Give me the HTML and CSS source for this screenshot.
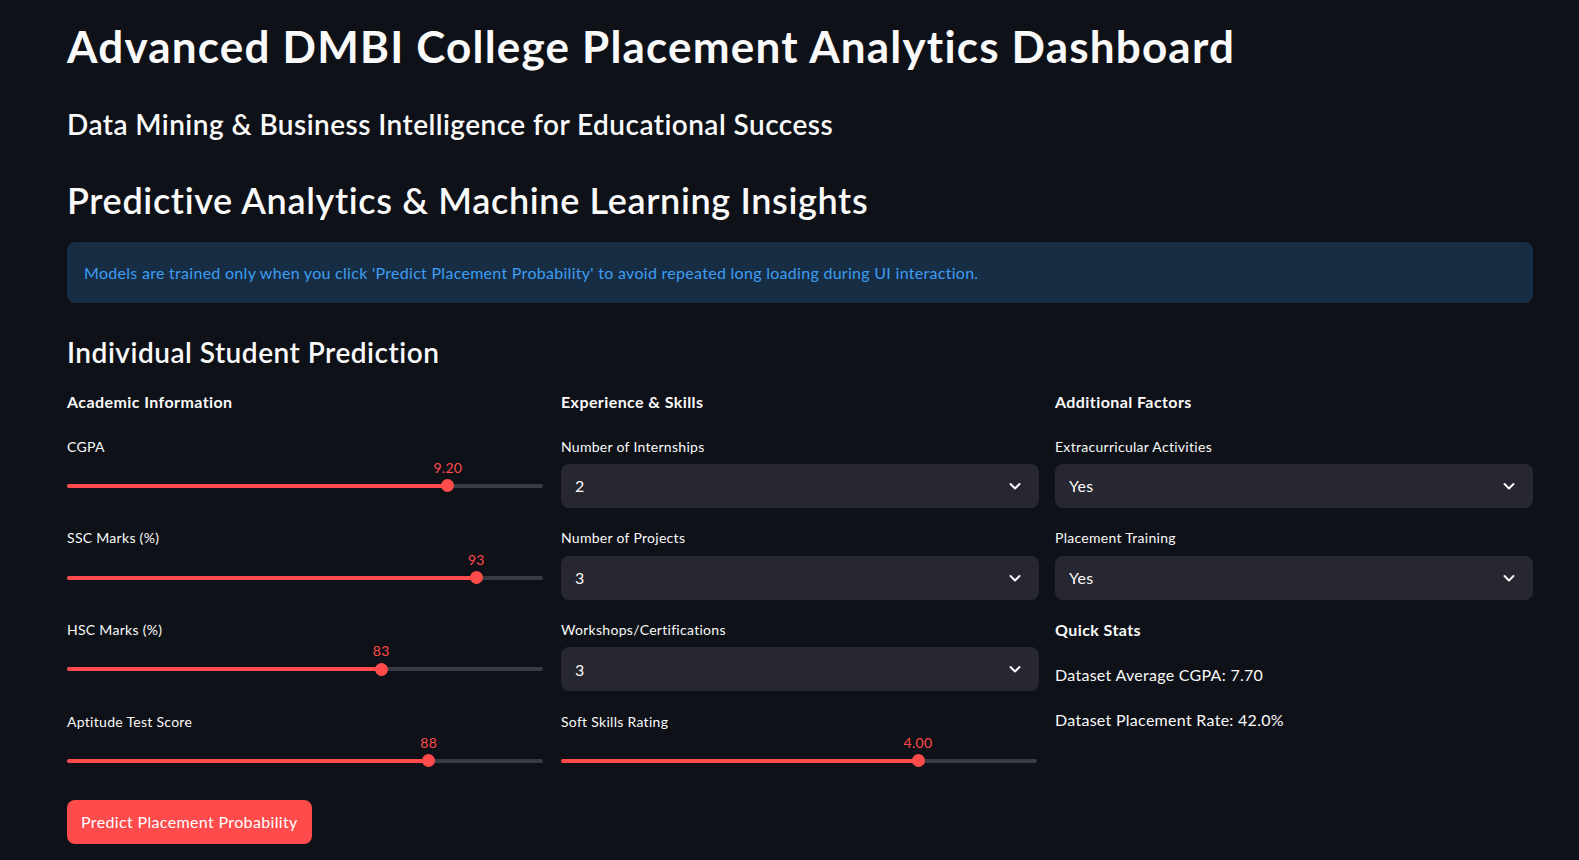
FILE: index.html
```html
<!DOCTYPE html>
<html lang="en">
<head>
<meta charset="utf-8">
<title>Advanced DMBI College Placement Analytics Dashboard</title>
<link rel="stylesheet" href="styles.css">
</head>
<body>
<div class="topbar"><span class="deploy">Deploy</span></div>
<main class="main">
  <h1 class="title">Advanced DMBI College Placement Analytics Dashboard</h1>
  <h3 class="subtitle">Data Mining &amp; Business Intelligence for Educational Success</h3>
  <h2 class="section">Predictive Analytics &amp; Machine Learning Insights</h2>
  <div class="info">Models are trained only when you click 'Predict Placement Probability' to avoid repeated long loading during UI interaction.</div>
  <h3 class="subsection">Individual Student Prediction</h3>

  <div class="cols">
    <div class="col">
      <div class="col-head">Academic Information</div>
      <div class="widget">
        <div class="label">CGPA</div>
        <div class="slider"><div class="track"><div class="fill" style="width:80%"></div><div class="thumb" style="left:80%"><span class="val">9.20</span></div></div></div>
      </div>
      <div class="widget">
        <div class="label">SSC Marks (%)</div>
        <div class="slider"><div class="track"><div class="fill" style="width:86%"></div><div class="thumb" style="left:86%"><span class="val">93</span></div></div></div>
      </div>
      <div class="widget">
        <div class="label">HSC Marks (%)</div>
        <div class="slider"><div class="track"><div class="fill" style="width:66%"></div><div class="thumb" style="left:66%"><span class="val">83</span></div></div></div>
      </div>
      <div class="widget">
        <div class="label">Aptitude Test Score</div>
        <div class="slider"><div class="track"><div class="fill" style="width:76%"></div><div class="thumb" style="left:76%"><span class="val">88</span></div></div></div>
      </div>
      <button class="btn" type="button">Predict Placement Probability</button>
    </div>

    <div class="col">
      <div class="col-head">Experience &amp; Skills</div>
      <div class="widget">
        <div class="label">Number of Internships</div>
        <div class="select"><span class="sel-val">2</span><svg class="chev" viewBox="0 0 16 16" width="16" height="16"><path d="M3.5 6 L8 10.5 L12.5 6" fill="none" stroke="#fafafa" stroke-width="2" stroke-linecap="round" stroke-linejoin="round"/></svg></div>
      </div>
      <div class="widget">
        <div class="label">Number of Projects</div>
        <div class="select"><span class="sel-val">3</span><svg class="chev" viewBox="0 0 16 16" width="16" height="16"><path d="M3.5 6 L8 10.5 L12.5 6" fill="none" stroke="#fafafa" stroke-width="2" stroke-linecap="round" stroke-linejoin="round"/></svg></div>
      </div>
      <div class="widget">
        <div class="label">Workshops/Certifications</div>
        <div class="select"><span class="sel-val">3</span><svg class="chev" viewBox="0 0 16 16" width="16" height="16"><path d="M3.5 6 L8 10.5 L12.5 6" fill="none" stroke="#fafafa" stroke-width="2" stroke-linecap="round" stroke-linejoin="round"/></svg></div>
      </div>
      <div class="widget">
        <div class="label">Soft Skills Rating</div>
        <div class="slider"><div class="track"><div class="fill" style="width:75%"></div><div class="thumb" style="left:75%"><span class="val">4.00</span></div></div></div>
      </div>
    </div>

    <div class="col">
      <div class="col-head">Additional Factors</div>
      <div class="widget">
        <div class="label">Extracurricular Activities</div>
        <div class="select"><span class="sel-val">Yes</span><svg class="chev" viewBox="0 0 16 16" width="16" height="16"><path d="M3.5 6 L8 10.5 L12.5 6" fill="none" stroke="#fafafa" stroke-width="2" stroke-linecap="round" stroke-linejoin="round"/></svg></div>
      </div>
      <div class="widget">
        <div class="label">Placement Training</div>
        <div class="select"><span class="sel-val">Yes</span><svg class="chev" viewBox="0 0 16 16" width="16" height="16"><path d="M3.5 6 L8 10.5 L12.5 6" fill="none" stroke="#fafafa" stroke-width="2" stroke-linecap="round" stroke-linejoin="round"/></svg></div>
      </div>
      <div class="col-head stats-head">Quick Stats</div>
      <p class="stat">Dataset Average CGPA: 7.70</p>
      <p class="stat">Dataset Placement Rate: 42.0%</p>
    </div>
  </div>
</main>
</body>
</html>
```

FILE: styles.css
```css
html, body {
  margin: 0;
  padding: 0;
}
body {
  background: #0e1117;
  color: #fafafa;
  font-family: Lato, "Noto Sans", "DejaVu Sans", sans-serif;
  letter-spacing: 0.018em;
  overflow: hidden;
  height: 860px;
  position: relative;
}

.topbar {
  position: absolute;
  top: 0;
  left: 0;
  right: 0;
  height: 0;
}
.deploy {
  position: absolute;
  top: -15px;
  left: 1515px;
  font-size: 14px;
  line-height: 16px;
  color: #fafafa;
}

.main {
  padding: 20.4px 46px 0 67px;
}

.title {
  font-size: 44px;
  font-weight: 700;
  letter-spacing: 0.027em;
  line-height: 1.2;
  margin: 0 0 35.2px;
}
.subtitle {
  font-size: 28px;
  font-weight: 600;
  letter-spacing: 0.016em;
  line-height: 1.2;
  margin: 0 0 37.4px;
}
.section {
  font-size: 36px;
  font-weight: 600;
  letter-spacing: 0.018em;
  line-height: 1.2;
  margin: 0 0 19.4px;
}
.info {
  height: 61px;
  box-sizing: border-box;
  display: flex;
  align-items: center;
  padding: 0 17px;
  border-radius: 8px;
  background: #172d43;
  color: #3d9df3;
  font-size: 16px;
  line-height: 1.2;
}
.subsection {
  font-size: 28px;
  font-weight: 600;
  letter-spacing: 0.018em;
  line-height: 1.2;
  margin: 33px 0 22.4px;
}

.cols {
  display: grid;
  grid-template-columns: repeat(3, 1fr);
  column-gap: 16px;
}
.col {
  display: flex;
  flex-direction: column;
  align-items: stretch;
  min-width: 0;
}
.col-head {
  font-size: 16px;
  font-weight: 700;
  letter-spacing: 0.026em;
  line-height: 1.2;
  margin-bottom: 25.4px;
}
.widget + .widget {
  margin-top: 20.3px;
}
.label {
  font-size: 14px;
  line-height: 20px;
  margin-bottom: 7.4px;
}

.slider {
  height: 44px;
  display: flex;
  align-items: center;
}
.track {
  position: relative;
  width: calc(100% - 2px);
  height: 4px;
  border-radius: 2px;
  background: #393b42;
}
.fill {
  height: 100%;
  border-radius: 2px;
  background: #ff4b4b;
}
.thumb {
  position: absolute;
  top: 50%;
  width: 13px;
  height: 13px;
  margin: -6.5px 0 0 -6.5px;
  border-radius: 50%;
  background: #ff4b4b;
}
.val {
  position: absolute;
  left: 50%;
  bottom: 15.5px;
  transform: translateX(-50%);
  font-size: 14px;
  line-height: 1.2;
  color: #ff4b4b;
  white-space: nowrap;
}

.select {
  height: 44px;
  box-sizing: border-box;
  display: flex;
  align-items: center;
  justify-content: space-between;
  padding: 0 16px 0 14px;
  border-radius: 8px;
  background: #262730;
  font-size: 16px;
}
.chev {
  display: block;
}

.btn {
  align-self: flex-start;
  margin-top: 17px;
  height: 44px;
  padding: 0 14px;
  border: none;
  border-radius: 8px;
  background: #ff4b4b;
  color: #ffffff;
  font-family: inherit;
  font-size: 16px;
  letter-spacing: 0.022em;
  line-height: 1.2;
}

.stats-head {
  margin-top: 20.1px;
  margin-bottom: 26px;
}
.stat {
  margin: 0 0 26.1px;
  font-size: 16px;
  line-height: 1.2;
}
```
